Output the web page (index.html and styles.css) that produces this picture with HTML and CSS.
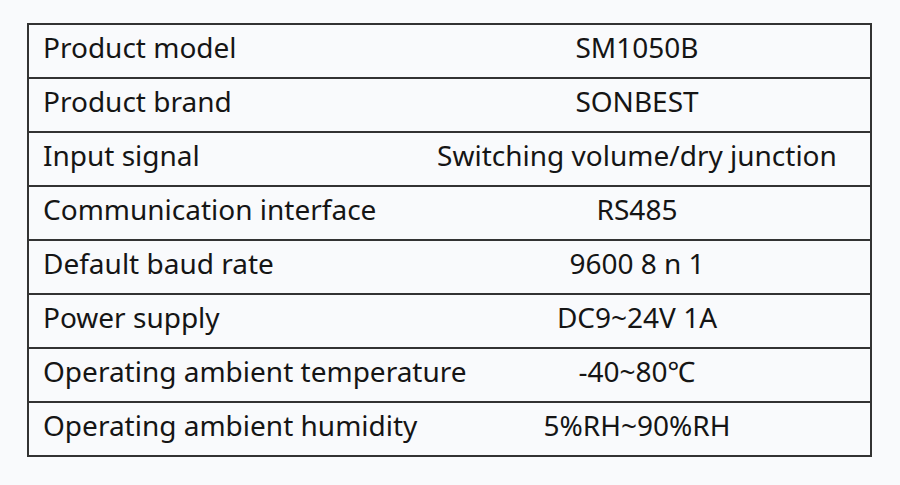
FILE: index.html
```html
<!DOCTYPE html>
<html>
<head>
<meta charset="utf-8">
<link rel="stylesheet" href="styles.css">
</head>
<body>
<div class="page">
  <table class="spec">
    <tr><td class="k">Product model</td><td class="v">SM1050B</td></tr>
    <tr><td class="k">Product brand</td><td class="v">SONBEST</td></tr>
    <tr><td class="k">Input signal</td><td class="v">Switching volume/dry junction</td></tr>
    <tr><td class="k">Communication interface</td><td class="v">RS485</td></tr>
    <tr><td class="k">Default baud rate</td><td class="v">9600 8 n 1</td></tr>
    <tr><td class="k">Power supply</td><td class="v">DC9~24V 1A</td></tr>
    <tr><td class="k">Operating ambient temperature</td><td class="v">-40~80℃</td></tr>
    <tr><td class="k">Operating ambient humidity</td><td class="v">5%RH~90%RH</td></tr>
  </table>
</div>
</body>
</html>
```
FILE: styles.css
```css
html, body {
  margin: 0;
  padding: 0;
  background: #f9fafc;
}
.page {
  width: 900px;
  height: 485px;
  padding: 23px 0 0 27px;
  box-sizing: border-box;
}
.spec {
  border-collapse: collapse;
  table-layout: fixed;
  width: 845px;
  font-family: "Noto Sans", sans-serif;
  font-size: 28px;
  color: #151515;
}
.spec tr {
  height: 54px;
}
.spec td {
  border-top: 2px solid #333;
  border-bottom: 2px solid #333;
  padding: 0 0 8px 0;
  vertical-align: middle;
  line-height: 1;
  white-space: nowrap;
}
.spec td.k {
  border-left: 2px solid #333;
  width: 361px;
  padding-left: 14px;
  text-align: left;
}
.spec td.v {
  border-right: 2px solid #333;
  text-align: center;
}
```
